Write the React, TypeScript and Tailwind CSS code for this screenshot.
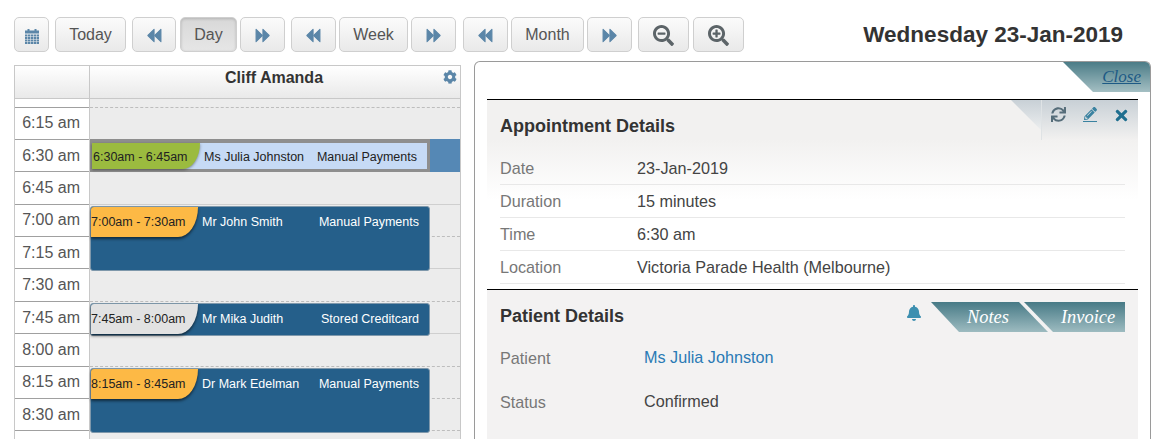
import React from 'react';
import { FaSearchMinus, FaSearchPlus, FaCog, FaSync, FaPencilAlt, FaTimes, FaBell } from 'react-icons/fa';

const sans = "font-['Liberation_Sans',Arial,sans-serif]";

const NavButton: React.FC<{ w: string; active?: boolean; children: React.ReactNode }> = ({ w, active, children }) => (
    <button
        className={`${w} h-[35px] pt-[1px] flex items-center justify-center rounded-[5px] border border-[#cfcfcf] text-[16px] text-[#555] ${
            active
                ? 'bg-[linear-gradient(#d8d8d8,#e6e6e6)] shadow-[inset_0_1px_3px_rgba(0,0,0,0.18)]'
                : 'bg-[linear-gradient(#fbfbfb,#e9e9e9)]'
        }`}
    >
        {children}
    </button>
);

// chunky double arrows, flip for forward
const Arrows: React.FC<{ flip?: boolean }> = ({ flip }) => (
    <svg width="15" height="15" viewBox="0 0 14 14" fill="#5b86a8" stroke="#5b86a8" strokeWidth="1" strokeLinejoin="round" className={flip ? '-scale-x-100' : ''}>
        <polygon points="0.8,7 6.6,1.2 6.6,12.8" />
        <polygon points="7.2,7 13,1.2 13,12.8" />
    </svg>
);

const back = <Arrows />;
const forward = <Arrows flip />;

// grid calendar glyph
const CalendarIcon = () => (
    <svg width="14" height="16" viewBox="0 0 14 16" className="mt-[4px]" fill="#5b86a8">
        <rect x="2.5" y="0" width="2" height="3" />
        <rect x="9.5" y="0" width="2" height="3" />
        <rect x="0" y="1.5" width="14" height="3" />
        {[5.5, 8, 10.5, 13].map(y =>
            [0, 2.9, 5.8, 8.7, 11.6].map(x => <rect key={`${x}-${y}`} x={x} y={y} width="2.4" height="2" />)
        )}
    </svg>
);

const times = [
    { label: '6:15 am', line: 'border-dashed border-[#bdbdbd]' },
    { label: '6:30 am', line: 'border-dashed border-[#bdbdbd]' },
    { label: '6:45 am', line: 'border-solid border-[#e0e0e0]' },
    { label: '7:00 am', line: 'border-solid border-[#cfcfcf]' },
    { label: '7:15 am', line: 'border-dashed border-[#bdbdbd]' },
    { label: '7:30 am', line: 'border-solid border-[#cfcfcf]' },
    { label: '7:45 am', line: 'border-dashed border-[#bdbdbd]' },
    { label: '8:00 am', line: 'border-solid border-[#cfcfcf]' },
    { label: '8:15 am', line: 'border-dashed border-[#bdbdbd]' },
    { label: '8:30 am', line: 'border-dashed border-[#bdbdbd]' },
    { label: '', line: 'border-dashed border-[#bdbdbd]' },
];

const events = [
    { pos: 'top-[107px] h-[65px]', tag: 'bg-[#fdb945]', time: '7:00am - 7:30am', name: 'Mr John Smith', pay: 'Manual Payments' },
    { pos: 'top-[204px] h-[33px]', tag: 'bg-[#e2e2e2]', time: '7:45am - 8:00am', name: 'Mr Mika Judith', pay: 'Stored Creditcard' },
    { pos: 'top-[269px] h-[65px]', tag: 'bg-[#fdb945]', time: '8:15am - 8:45am', name: 'Dr Mark Edelman', pay: 'Manual Payments' },
];

const apptRows = [
    ['Date', '23-Jan-2019'],
    ['Duration', '15 minutes'],
    ['Time', '6:30 am'],
    ['Location', 'Victoria Parade Health (Melbourne)'],
];

export default function App() {
    return (
        <div className={`${sans} w-[1160px] h-[439px] overflow-hidden bg-white flex flex-col`}>
            {/* toolbar */}
            <div className="flex items-center pt-[17px] pl-[14px]">
                <NavButton w="w-[35px]"><CalendarIcon /></NavButton>
                <div className="w-[6px]" />
                <NavButton w="w-[71px]">Today</NavButton>
                <div className="w-[6px]" />
                <NavButton w="w-[44px]">{back}</NavButton>
                <div className="w-[4px]" />
                <NavButton w="w-[57px]" active>Day</NavButton>
                <div className="w-[3px]" />
                <NavButton w="w-[45px]">{forward}</NavButton>
                <div className="w-[6px]" />
                <NavButton w="w-[45px]">{back}</NavButton>
                <div className="w-[3px]" />
                <NavButton w="w-[69px]">Week</NavButton>
                <div className="w-[3px]" />
                <NavButton w="w-[45px]">{forward}</NavButton>
                <div className="w-[7px]" />
                <NavButton w="w-[45px]">{back}</NavButton>
                <div className="w-[3px]" />
                <NavButton w="w-[73px]">Month</NavButton>
                <div className="w-[3px]" />
                <NavButton w="w-[45px]">{forward}</NavButton>
                <div className="w-[6px]" />
                <NavButton w="w-[51px]"><FaSearchMinus className="text-[#5c6468] text-[21px]" /></NavButton>
                <div className="w-[4px]" />
                <NavButton w="w-[51px]"><FaSearchPlus className="text-[#5c6468] text-[21px]" /></NavButton>
                <h1 className="ml-auto mr-[37px] pt-[1px] text-[22.5px] font-bold text-[#333]">Wednesday 23-Jan-2019</h1>
            </div>

            <div className="flex flex-1 min-h-0 pl-[14px]">
                {/* calendar */}
                <div className="w-[447px] mt-[13px] border-x border-t border-[#c8c8c8] flex flex-col overflow-hidden">
                    <div className="h-[33px] shrink-0 flex border-b border-[#c8c8c8] bg-[linear-gradient(#ffffff,#e9e9e9)]">
                        <div className="w-[75px] border-r border-[#c8c8c8]" />
                        <div className="flex-1 relative pr-[2px] text-center text-[16px] font-bold text-[#333] leading-[24px]">
                            Cliff Amanda
                            <FaCog className="absolute right-[3px] top-[4px] text-[#5b86a8] text-[14px]" />
                        </div>
                    </div>
                    <div className="flex">
                        <div className="w-[75px] shrink-0 bg-white border-r border-[#c8c8c8]">
                            <div className="h-[7.5px]" />
                            {times.map(t => (
                                <div key={t.label} className="h-[32.4px] border-t border-[#a0a0a0] flex items-center justify-end pr-[9px] text-[16px] text-[#555]">
                                    {t.label}
                                </div>
                            ))}
                        </div>
                        <div className="flex-1 relative bg-[#ececec]">
                            <div className="h-[7.5px]" />
                            {times.map(t => (
                                <div key={t.label} className={`h-[32.4px] border-t ${t.line}`} />
                            ))}
                            {/* selected appointment */}
                            <div className="absolute left-0 right-0 top-[40px] h-[33px] bg-[#5588b5]">
                                <div className="w-[340px] h-full border-x-[3px] border-t-[4px] border-b-[3px] border-[#8e8e8e] bg-[#c6daf5] flex items-center text-[12.5px] text-[#222]">
                                    <div className="w-[108px] h-full -ml-[1px] pt-[2px] bg-[#9bbb3f] rounded-br-[20px_30px] pl-[1px] flex items-center shadow-[0_1px_3px_rgba(0,0,0,0.4)]">
                                        6:30am - 6:45am
                                    </div>
                                    <span className="ml-[4px] pt-[2px]">Ms Julia Johnston</span>
                                    <span className="ml-auto mr-[10px] pt-[2px]">Manual Payments</span>
                                </div>
                            </div>
                            {events.map(e => (
                                <div key={e.time} className={`absolute left-0 w-[340px] ${e.pos} rounded-[3px] bg-[#255f8a] border border-[#7f98ab] text-[12.5px] text-white`}>
                                    <div className="h-[30px] flex items-center">
                                        <div className={`${e.tag} w-[107px] h-full rounded-tl-[3px] rounded-br-[20px_30px] flex items-center text-[#222] shadow-[0_2px_3px_rgba(0,0,0,0.55)]`}>
                                            {e.time}
                                        </div>
                                        <span className="ml-[4px]">{e.name}</span>
                                        <span className="ml-auto mr-[10px]">{e.pay}</span>
                                    </div>
                                </div>
                            ))}
                        </div>
                    </div>
                </div>

                {/* details panel */}
                <div className="w-[677px] ml-[13px] mt-[9px] border-x border-t border-[#9a9a9a] rounded-t-[6px] relative px-[12px] pt-[37px] flex flex-col overflow-hidden">
                    <div className="absolute top-0 right-0 w-[87px] h-[30px] bg-[linear-gradient(#4b7c87,#a4bfc3)] [clip-path:polygon(0_0,100%_0,100%_100%,30px_100%)] flex items-center justify-end pr-[9px]">
                        <a className="font-['Liberation_Serif',serif] italic underline text-[17px] text-[#1d5a85]">Close</a>
                    </div>

                    <section className="relative border-t border-black pb-[5px] bg-[linear-gradient(#f2f1f0_0,#f2f1f0_40px,#ffffff_100px)]">
                        <div className="absolute top-0 right-0 flex">
                            <div className="w-[30px] h-[30px] bg-[linear-gradient(#c8d0d6,#eceeef)] [clip-path:polygon(0_0,100%_0,100%_100%)]" />
                            <div className="w-[97px] h-[40px] border-l border-[#dfe3e5] bg-[linear-gradient(#c8d0d6,#f2f1f0)] flex items-start pt-[7px] pl-[9px]">
                                <FaSync className="text-[#566d7a] text-[15px]" />
                                <div className="ml-[17px] flex flex-col items-center">
                                    <FaPencilAlt className="text-[#3a82a0] text-[13px]" />
                                    <div className="w-[14px] h-[1px] mt-[1px] bg-[#3a82a0]" />
                                </div>
                                <FaTimes className="ml-[16px] text-[#1f6f8f] text-[17px]" />
                            </div>
                        </div>
                        <h2 className="h-[52px] pl-[13px] pt-[13px] text-[18px] font-bold text-[#333]">Appointment Details</h2>
                        <div className="mx-[13px]">
                            {apptRows.map(([k, v]) => (
                                <div key={k} className="h-[33px] flex items-center border-b border-[#e8e8e8] text-[16.2px]">
                                    <span className="w-[137px] text-[#777]">{k}</span>
                                    <span className="text-[#444]">{v}</span>
                                </div>
                            ))}
                        </div>
                    </section>

                    <section className="flex-1 border-t border-black bg-[#f3f2f2] px-[13px]">
                        <div className="h-[45px] flex items-start">
                            <h2 className="pt-[13px] text-[18px] font-bold text-[#333]">Patient Details</h2>
                            <FaBell className="ml-auto mt-[15px] mr-[9px] text-[#3c8fb0] text-[16px]" />
                            <div className="mt-[12px] w-[117px] h-[30px] pl-[36px] pt-[1px] bg-[linear-gradient(#477a86,#9dbbc0)] [clip-path:polygon(0_0,88px_0,100%_100%,28px_100%)] flex items-center font-['Liberation_Serif',serif] italic text-[18.4px] text-white">
                                Notes
                            </div>
                            <div className="mt-[12px] -ml-[24px] w-[101px] h-[30px] pl-[37px] pt-[1px] bg-[linear-gradient(#477a86,#9dbbc0)] [clip-path:polygon(0_0,100%_0,100%_100%,29px_100%)] flex items-center font-['Liberation_Serif',serif] italic text-[18.4px] text-white">
                                Invoice
                            </div>
                        </div>
                        <div className="h-[44px] flex items-center text-[16.2px]">
                            <span className="w-[144px] pt-[2px] text-[#777]">Patient</span>
                            <a className="text-[#2a7ab5]">Ms Julia Johnston</a>
                        </div>
                        <div className="h-[44px] flex items-center text-[16.2px]">
                            <span className="w-[144px] pt-[2px] text-[#777]">Status</span>
                            <span className="text-[#444]">Confirmed</span>
                        </div>
                    </section>
                </div>
            </div>
        </div>
    );
}
